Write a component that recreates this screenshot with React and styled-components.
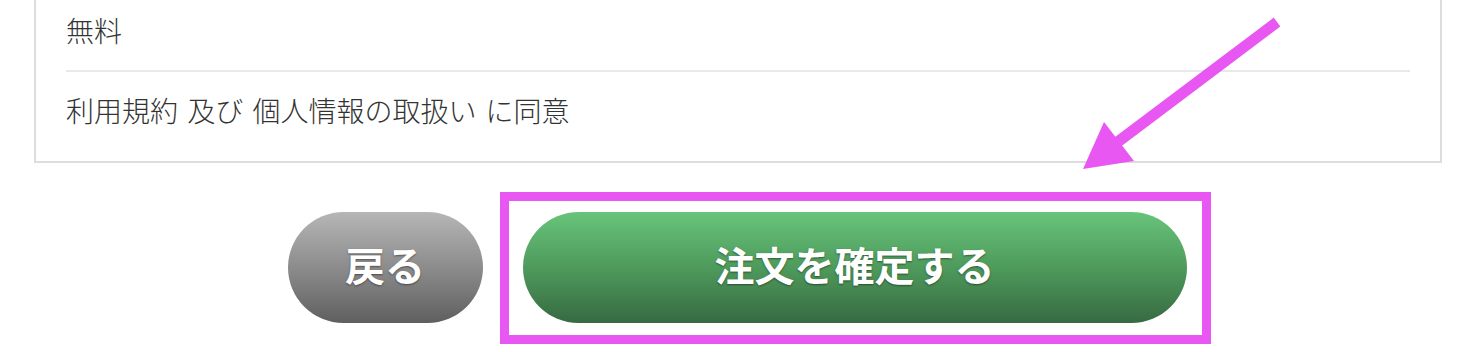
import styled, { createGlobalStyle } from "styled-components";

const GlobalStyle = createGlobalStyle`
  html, body {
    margin: 0;
    padding: 0;
    background: #ffffff;
  }
  body {
    font-family: "Noto Sans CJK JP", "Noto Sans", sans-serif;
    color: #333333;
    overflow: hidden;
  }
`

const Page = styled('div')`
  position: relative;
  width: 1474px;
  height: 352px;
  overflow: hidden;
`

const Card = styled('div')`
  margin: -10px 32px 0 34px;
  border: 2px solid #dddddd;
  padding: 0 30px 11px 30px;
  background: #ffffff;
`

const Row = styled('div')`
  padding: 18px 0 20px;
  font-size: 28px;
  font-weight: 300;
  line-height: 40px;
  word-spacing: 3px;
  color: #333333;
  border-top: ${p => (p.$first ? 'none' : '2px solid #e9e9e9')};
`

const Actions = styled('div')`
  display: flex;
  justify-content: center;
  align-items: center;
  gap: 40px;
  margin-top: 49px;
`

const PillButton = styled('button')`
  border: none;
  height: 111px;
  width: ${p => p.$width}px;
  border-radius: 56px;
  background: ${p => p.$gradient};
  color: #ffffff;
  font-family: "Noto Sans CJK JP", "Noto Sans", sans-serif;
  font-weight: 700;
  font-size: 40px;
  text-shadow: 0 1px 2px rgba(0, 0, 0, 0.45);
  cursor: pointer;
  padding: 0 0 8px;
`

const HighlightWrap = styled('div')`
  position: relative;
  display: flex;
`

const Highlight = styled('span')`
  position: absolute;
  top: -20px;
  bottom: -21px;
  left: -23px;
  right: -24px;
  border: 9px solid #e857f1;
  pointer-events: none;
`

const Arrow = styled('svg')`
  position: absolute;
  left: 1075px;
  top: 12px;
  width: 215px;
  height: 165px;
  pointer-events: none;
`

const GRAY = 'linear-gradient(to bottom, #b6b6b6 0%, #8c8c8c 50%, #5f5f5f 100%)'
const GREEN = 'linear-gradient(to bottom, #68c47a 0%, #4e9a5c 50%, #376a41 100%)'

export default function App() {
  return (
    <Page>
      <GlobalStyle />
      <Card>
        <Row $first>無料</Row>
        <Row>利用規約 及び 個人情報の取扱い に同意</Row>
      </Card>
      <Actions>
        <PillButton $width={195} $gradient={GRAY}>戻る</PillButton>
        <HighlightWrap>
          <PillButton $width={664} $gradient={GREEN}>注文を確定する</PillButton>
          <Highlight />
        </HighlightWrap>
      </Actions>
      <Arrow viewBox="0 0 215 165">
        <line x1="202" y1="10" x2="40" y2="132" stroke="#e857f1" strokeWidth="11" />
        <polygon points="8,157 29,110 59,149" fill="#e857f1" />
      </Arrow>
    </Page>
  )
}
